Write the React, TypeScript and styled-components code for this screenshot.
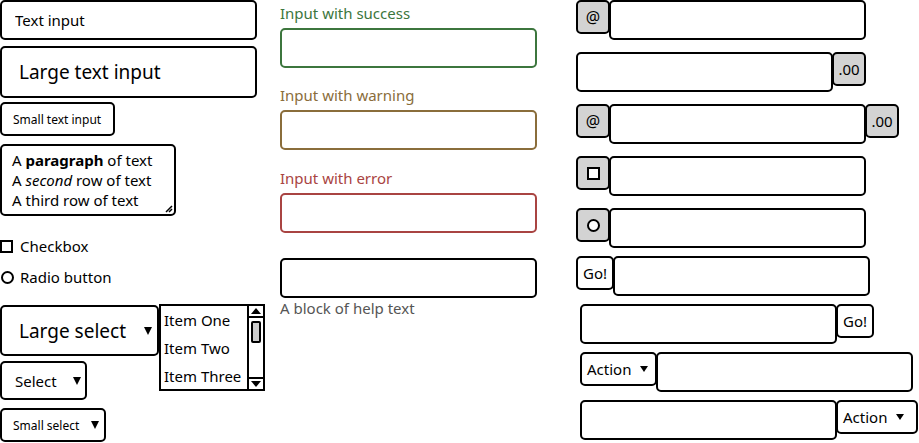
import React from "react";
import styled, { createGlobalStyle, css } from "styled-components";

const Global = createGlobalStyle`
  html, body { margin: 0; padding: 0; background: #fff; }
  body { font-family: "Noto Sans", "Open Sans", sans-serif; color: #000; }
  * { box-sizing: border-box; }
`;

const Page = styled.div`
  display: flex;
  align-items: flex-start;
  width: 919px;
  height: 443px;
  overflow: hidden;
`;

/* ---------- column 1 ---------- */
const Col1 = styled.div`
  width: 266px;
  display: flex;
  flex-direction: column;
  align-items: flex-start;
`;

type Size = "lg" | "md" | "sm";
const sizes = {
  lg: { h: 52, fs: 19, pl: 17 },
  md: { h: 40, fs: 15, pl: 13 },
  sm: { h: 34, fs: 12, pl: 11 },
};

const TextBox = styled.input<{ $size: Size; $w: number; $mt: number }>`
  display: block;
  width: ${(p) => p.$w}px;
  height: ${(p) => sizes[p.$size].h}px;
  margin: ${(p) => p.$mt}px 0 0 0;
  padding: 0 0 0 ${(p) => sizes[p.$size].pl}px;
  font-family: inherit;
  font-size: ${(p) => sizes[p.$size].fs}px;
  color: #000;
  background: #fff;
  border: 2px solid #000;
  border-radius: 5px;
  outline: none;
`;

const TextArea = styled.div`
  position: relative;
  margin-top: 8px;
  width: 176px;
  height: 72px;
  border: 2px solid #000;
  border-radius: 5px;
  padding: 4px 0 0 10px;
  font-size: 15px;
  line-height: 20px;
  white-space: nowrap;
`;

const Grip = styled.svg`
  position: absolute;
  right: 1px;
  bottom: 1px;
`;

const CheckRow = styled.label<{ $mt: number }>`
  display: flex;
  align-items: center;
  gap: 7px;
  margin-top: ${(p) => p.$mt}px;
  height: 20px;
  font-size: 15px;
`;

const CheckMark = styled.span`
  display: inline-block;
  width: 13px;
  height: 13px;
  border: 2px solid #000;
  background: #fff;
`;

const RadioMark = styled.span<{ $inline?: boolean }>`
  display: inline-block;
  width: 13px;
  height: 13px;
  border: 2px solid #000;
  border-radius: 50%;
  margin: ${(p) => (p.$inline ? "0" : "0 -1px 0 1px")};
  background: #fff;
`;

const SelectArea = styled.div`
  display: flex;
  align-items: flex-start;
  margin-top: 18px;
`;

const SelectStack = styled.div`
  display: flex;
  flex-direction: column;
  align-items: flex-start;
`;

const selSizes = {
  lg: { h: 51, fs: 19, pl: 17, pr: 5, w: 159 },
  md: { h: 39, fs: 15, pl: 13, pr: 4, w: 87 },
  sm: { h: 34, fs: 12, pl: 11, pr: 5, w: 106 },
};

const SelectBox = styled.div<{ $size: Size; $mt: number }>`
  display: flex;
  align-items: center;
  justify-content: space-between;
  width: ${(p) => selSizes[p.$size].w}px;
  height: ${(p) => selSizes[p.$size].h}px;
  margin-top: ${(p) => p.$mt}px;
  padding: 0 ${(p) => selSizes[p.$size].pr}px 0 ${(p) => selSizes[p.$size].pl}px;
  font-size: ${(p) => selSizes[p.$size].fs}px;
  border: 2px solid #000;
  border-radius: 5px;
  background: #fff;
`;

const Caret = styled.span<{ $flat?: boolean }>`
  display: inline-block;
  width: 0;
  height: 0;
  border-left: 4px solid transparent;
  border-right: 4px solid transparent;
  border-top: ${(p) => (p.$flat ? 6 : 8)}px solid #000;
`;

const ListBox = styled.div`
  display: flex;
  margin-top: -1px;
  width: 106px;
  height: 87px;
  border: 2px solid #000;
  background: #fff;
`;

const ListItems = styled.div`
  flex: 1;
  padding: 0 0 0 3px;
  font-size: 15px;
  line-height: 28px;
  white-space: nowrap;
  overflow: hidden;
`;

const ScrollBar = styled.div`
  width: 16px;
  border-left: 2px solid #000;
  display: flex;
  flex-direction: column;
  align-items: center;
`;

const ScrollArrow = styled.div<{ $down?: boolean }>`
  width: 100%;
  height: 12px;
  display: flex;
  align-items: center;
  justify-content: center;
  ${(p) =>
    p.$down
      ? css`border-top: 2px solid #000; margin-top: auto;`
      : css`border-bottom: 2px solid #000;`}
  &::after {
    content: "";
    width: 0;
    height: 0;
    border-left: 5px solid transparent;
    border-right: 5px solid transparent;
    ${(p) =>
      p.$down
        ? css`border-top: 6px solid #000;`
        : css`border-bottom: 6px solid #000;`}
  }
`;

const Thumb = styled.div`
  margin-top: 3px;
  width: 10px;
  height: 22px;
  background: #ccc;
  border: 2px solid #000;
  border-radius: 2px;
`;

/* ---------- column 2 ---------- */
const Col2 = styled.div`
  margin-left: 14px;
  width: 257px;
  padding-top: 3px;
  display: flex;
  flex-direction: column;
`;

const tones = {
  success: "#3c763d",
  warning: "#8a6d3b",
  error: "#a94442",
  plain: "#000",
};
type Tone = keyof typeof tones;

const StateLabel = styled.label<{ $tone: Tone; $mt: number }>`
  display: block;
  margin-top: ${(p) => p.$mt}px;
  height: 20px;
  line-height: 20px;
  margin-bottom: 5px;
  font-size: 15px;
  color: ${(p) => tones[p.$tone]};
`;

const StateInput = styled.input<{ $tone: Tone; $mt?: number }>`
  display: block;
  width: 257px;
  height: 40px;
  margin: ${(p) => p.$mt ?? 0}px 0 0 0;
  border: 2px solid ${(p) => tones[p.$tone]};
  border-radius: 5px;
  background: #fff;
  outline: none;
  font-family: inherit;
  font-size: 15px;
`;

const HelpText = styled.div`
  height: 20px;
  line-height: 20px;
  font-size: 15px;
  color: #555;
`;

/* ---------- column 3 ---------- */
const Col3 = styled.div`
  margin-left: 39px;
  display: flex;
  flex-direction: column;
`;

const Group = styled.div<{ $mb: number; $indent?: number }>`
  display: flex;
  align-items: flex-start;
  margin-bottom: ${(p) => p.$mb}px;
  margin-left: ${(p) => p.$indent ?? 0}px;
`;

const Field = styled.input`
  display: block;
  width: 257px;
  height: 40px;
  margin: 0 -1px;
  border: 2px solid #000;
  border-radius: 5px;
  background: #fff;
  outline: none;
  font-family: inherit;
  font-size: 15px;
  &:first-child { margin-left: 0; }
  &:last-child { margin-right: 0; }
`;

const Addon = styled.span<{ $fs?: number }>`
  display: flex;
  align-items: center;
  justify-content: center;
  flex: none;
  min-width: 34px;
  height: 34px;
  padding: 0 3px;
  background: #d3d3d3;
  border: 2px solid #000;
  border-radius: 5px;
  font-size: ${(p) => p.$fs ?? 15}px;
  position: relative;
  z-index: 1;
`;

const Btn = styled.button<{ $pr?: number }>`
  display: flex;
  align-items: center;
  gap: 9px;
  flex: none;
  height: 34px;
  padding: 0 ${(p) => p.$pr ?? 5}px 0 5px;
  background: #fff;
  border: 2px solid #000;
  border-radius: 5px;
  font-family: inherit;
  font-size: 15px;
  color: #000;
  position: relative;
  z-index: 1;
`;

export default function App() {
  return (
    <>
      <Global />
      <Page>
        <Col1>
          <TextBox $size="md" $w={257} $mt={0} defaultValue="Text input" />
          <TextBox $size="lg" $w={257} $mt={6} defaultValue="Large text input" />
          <TextBox $size="sm" $w={115} $mt={4} defaultValue="Small text input" />
          <TextArea>
            A <b>paragraph</b> of text
            <br />A <i>second</i> row of text
            <br />A third row of text
            <Grip width="8" height="8" viewBox="0 0 8 8">
              <path d="M1 7 L7 1 M4 7 L7 4" stroke="#000" strokeWidth="1.5" />
            </Grip>
          </TextArea>
          <CheckRow $mt={20}>
            <CheckMark />
            Checkbox
          </CheckRow>
          <CheckRow $mt={11}>
            <RadioMark />
            Radio button
          </CheckRow>
          <SelectArea>
            <SelectStack>
              <SelectBox $size="lg" $mt={0}>
                Large select <Caret />
              </SelectBox>
              <SelectBox $size="md" $mt={5}>
                Select <Caret />
              </SelectBox>
              <SelectBox $size="sm" $mt={8}>
                Small select <Caret />
              </SelectBox>
            </SelectStack>
            <ListBox>
              <ListItems>
                Item One
                <br />
                Item Two
                <br />
                Item Three
              </ListItems>
              <ScrollBar>
                <ScrollArrow />
                <Thumb />
                <ScrollArrow $down />
              </ScrollBar>
            </ListBox>
          </SelectArea>
        </Col1>

        <Col2>
          <StateLabel $tone="success" $mt={0}>Input with success</StateLabel>
          <StateInput $tone="success" />
          <StateLabel $tone="warning" $mt={17}>Input with warning</StateLabel>
          <StateInput $tone="warning" />
          <StateLabel $tone="error" $mt={18}>Input with error</StateLabel>
          <StateInput $tone="error" />
          <StateInput $tone="plain" $mt={25} />
          <HelpText>A block of help text</HelpText>
        </Col2>

        <Col3>
          <Group $mb={12}>
            <Addon $fs={16}>@</Addon>
            <Field />
          </Group>
          <Group $mb={12}>
            <Field />
            <Addon>.00</Addon>
          </Group>
          <Group $mb={12}>
            <Addon $fs={16}>@</Addon>
            <Field />
            <Addon>.00</Addon>
          </Group>
          <Group $mb={12}>
            <Addon>
              <CheckMark />
            </Addon>
            <Field />
          </Group>
          <Group $mb={8}>
            <Addon>
              <RadioMark $inline />
            </Addon>
            <Field />
          </Group>
          <Group $mb={8}>
            <Btn>Go!</Btn>
            <Field />
          </Group>
          <Group $mb={8} $indent={4}>
            <Field />
            <Btn>Go!</Btn>
          </Group>
          <Group $mb={8} $indent={4}>
            <Btn $pr={7}>
              Action <Caret $flat />
            </Btn>
            <Field />
          </Group>
          <Group $mb={0} $indent={4}>
            <Field />
            <Btn $pr={12}>
              Action <Caret $flat />
            </Btn>
          </Group>
        </Col3>
      </Page>
    </>
  );
}
